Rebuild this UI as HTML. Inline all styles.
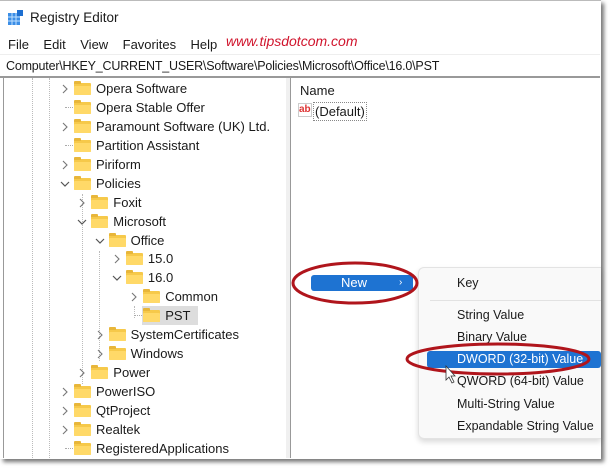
<!DOCTYPE html>
<html><head><style>
*{margin:0;padding:0;box-sizing:border-box}
body{width:615px;height:474px;background:#fff;position:relative;overflow:hidden;font-family:"Liberation Sans",sans-serif;font-size:13px;color:#1a1a1a}
.win{position:absolute;left:0;top:0;width:601px;height:459px;background:#fff;border-top:1px solid #bbb;box-shadow:3px 3px 4px #777}
.t{position:absolute;white-space:nowrap}
.row{position:absolute;height:19px;line-height:19px;white-space:nowrap}
.fold{position:absolute;top:4px;width:17px;height:12px;background:#f6c94a;border-radius:1px}
.fold:before{content:"";position:absolute;left:0;top:-2px;width:7px;height:3px;background:#e8b63a;border-radius:1px 1px 0 0}
.fold:after{content:"";position:absolute;left:0;top:3px;width:17px;height:9px;background:#ffd968;border-radius:1px}
.chev{position:absolute;top:5px;left:-14px}
.mi{position:absolute;left:457px;font-size:12.5px}
</style></head><body>
<div class="win">
<svg class="t" style="left:8px;top:9px" width="16" height="16"><rect x="0" y="3" width="12" height="12" fill="#3c8ee6"/><rect x="9" y="0" width="6" height="6" fill="#1d6fd1"/><path d="M4 3v12M8 3v12M0 7h12M0 11h12" stroke="#bfe0ff" stroke-width="1"/></svg>
<div class="t" style="left:30px;top:9px;font-size:13.5px">Registry Editor</div>
<div class="t" style="left:8px;top:36px">File&nbsp;&nbsp;&nbsp;&nbsp;Edit&nbsp;&nbsp;&nbsp;&nbsp;View&nbsp;&nbsp;&nbsp;&nbsp;Favorites&nbsp;&nbsp;&nbsp;&nbsp;Help</div>
<div class="t" style="left:226px;top:32px;color:#d0142c;font-style:italic;font-size:14px">www.tipsdotcom.com</div>
<div style="position:absolute;left:0;top:53px;width:600px;height:1px;background:#eee"></div>
<div class="t" style="left:6px;top:58px;font-size:12.5px;letter-spacing:-0.2px">Computer\HKEY_CURRENT_USER\Software\Policies\Microsoft\Office\16.0\PST</div>
<div style="position:absolute;left:0;top:75px;width:600px;height:2px;background:#999"></div>
<div style="position:absolute;left:3px;top:77px;width:1px;height:380px;background:#999"></div>
<div style="position:absolute;left:286px;top:77px;width:5px;height:380px;background:#f0f0f0;border-right:1px solid #999"></div>
<div style="position:absolute;left:32px;top:77px;height:380px;border-left:1px dotted #bbb"></div>
<div style="position:absolute;left:49px;top:77px;height:380px;border-left:1px dotted #bbb"></div>
<div style="position:absolute;left:82px;top:193px;height:190px;border-left:1px dotted #bbb"></div>
<div style="position:absolute;left:99px;top:250px;height:110px;border-left:1px dotted #bbb"></div>
<div style="position:absolute;left:134px;top:305px;height:12px;border-left:1px dotted #bbb"></div>

<div id="tree"></div>
<div class="t" style="left:300px;top:82px">Name</div>
<div style="position:absolute;left:298px;top:102px;width:14px;height:14px;background:#fff;border:1px solid #ccc;color:#d33;font-size:10px;font-weight:bold;line-height:11px">ab</div>
<div class="t" style="left:313px;top:101px;border:1px dotted #888;padding:0 1px;line-height:17px">(Default)</div>

<div style="position:absolute;left:311px;top:274px;width:102px;height:16px;background:#1e73d2;border-radius:3px;color:#fff;line-height:16px"><span style="position:absolute;left:30px">New</span><span style="position:absolute;left:88px;font-size:10px">›</span></div>
<div style="position:absolute;left:418px;top:266px;width:183px;height:172px;background:#f9f9f9;border:1px solid #e3e3e3;border-right:none;border-radius:6px 0 0 6px;box-shadow:0 3px 6px rgba(0,0,0,.15)"></div>
<div style="position:absolute;left:430px;top:299px;width:171px;height:1px;background:#e2e2e2"></div>
<div style="position:absolute;left:427px;top:350px;width:174px;height:17px;background:#1e73d2;border-radius:3px"></div>
<div class="mi" style="top:275px">Key</div>
<div class="mi" style="top:307px">String Value</div>
<div class="mi" style="top:329px">Binary Value</div>
<div class="mi" style="top:351px;color:#fff">DWORD (32-bit) Value</div>
<div class="mi" style="top:373px">QWORD (64-bit) Value</div>
<div class="mi" style="top:396px">Multi-String Value</div>
<div class="mi" style="top:418px">Expandable String Value</div>
<svg style="position:absolute;left:0;top:0" width="615" height="474"><ellipse cx="355" cy="282" rx="62" ry="20" fill="none" stroke="#b0151c" stroke-width="3"/><ellipse cx="498" cy="358" rx="91" ry="15" fill="none" stroke="#b0151c" stroke-width="3"/><path d="M446 365v14l3-3 3 6 2-1-3-6h4z" fill="#fff" stroke="#333" stroke-width="0.8"/></svg>
</div>
<script>
var r=[["Opera Software",0,">"],["Opera Stable Offer",0,"-"],["Paramount Software (UK) Ltd.",0,">"],["Partition Assistant",0,"-"],["Piriform",0,">"],["Policies",0,"v"],["Foxit",1,">"],["Microsoft",1,"v"],["Office",2,"v"],["15.0",3,">"],["16.0",3,"v"],["Common",4,">"],["PST",4,"-"],["SystemCertificates",2,">"],["Windows",2,">"],["Power",1,">"],["PowerISO",0,">"],["QtProject",0,">"],["Realtek",0,">"],["RegisteredApplications",0,"-"]];
var h="",y=[78,97,116,135,154,173,192,211,230,248,267,286,305,324,343,362,381,400,419,438];
r.forEach(function(a,i){var x=74+a[1]*17.3;
var c=a[2]==">"?'<svg class="chev" width="10" height="10"><path d="M3 1l4 4-4 4" fill="none" stroke="#777" stroke-width="1.1"/></svg>':a[2]=="v"?'<svg class="chev" width="10" height="10"><path d="M1 3l4 4 4-4" fill="none" stroke="#555" stroke-width="1.2"/></svg>':'<span style="position:absolute;left:-9px;top:9px;width:8px;border-top:1px dotted #aaa"></span>';
var sel=a[0]=="PST"?'<span style="position:absolute;left:-1px;top:0;width:56px;height:19px;background:#ddd"></span>':'';
h+='<div class="row" style="left:'+x+'px;top:'+y[i]+'px">'+sel+c+'<span class="fold" style="left:0"></span><span style="position:relative;margin-left:22px">'+a[0]+'</span></div>';});
document.getElementById("tree").outerHTML=h;
</script>
</body></html>
